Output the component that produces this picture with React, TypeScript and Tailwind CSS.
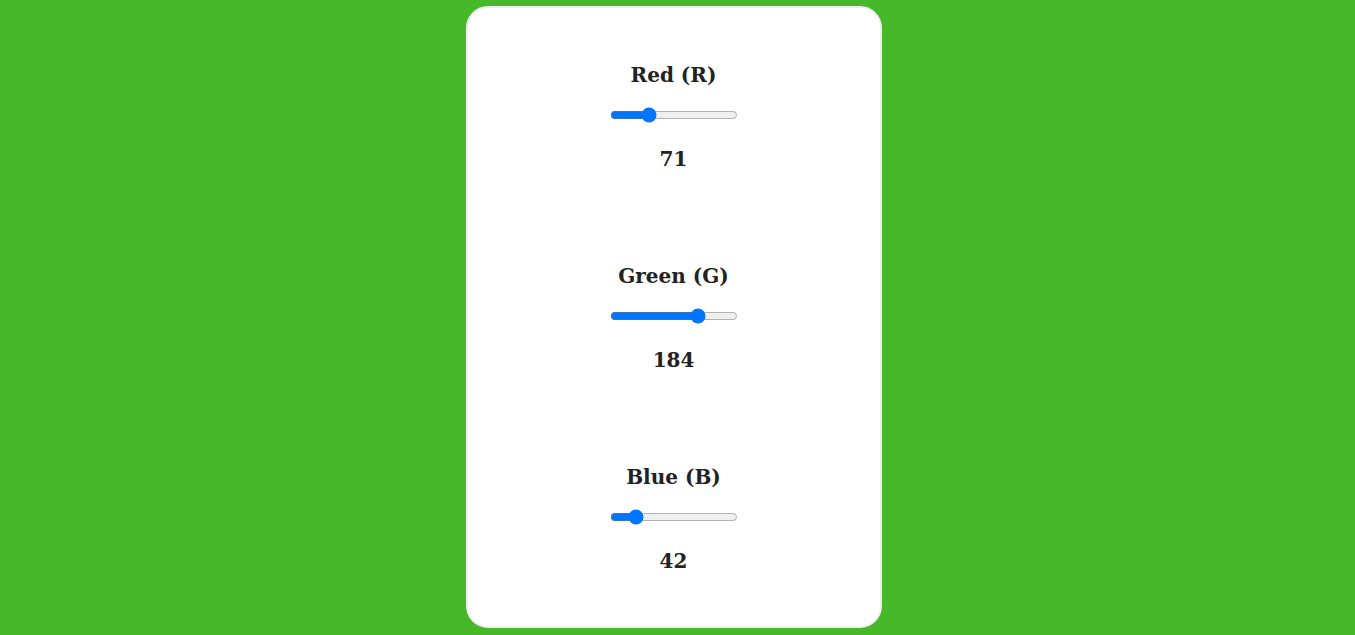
import { useState } from "react";

const channels = [
  { key: "r", label: "Red (R)", initial: 71 },
  { key: "g", label: "Green (G)", initial: 184 },
  { key: "b", label: "Blue (B)", initial: 42 },
];

function ChannelSlider({ label, value, onChange }: { label: string; value: number; onChange: (v: number) => void }) {
  return (
    <div className="flex flex-col items-center">
      <h2 className="text-[20px] font-bold leading-6 text-[#222]">{label}</h2>
      <input
        type="range"
        min={0}
        max={255}
        value={value}
        onChange={(e) => onChange(Number(e.target.value))}
        className="mt-5 h-4 w-[128px] accent-[#0075ff]"
      />
      <p className="mt-6 text-[20px] font-bold leading-6 text-[#222]">{value}</p>
    </div>
  );
}

export default function App() {
  const [values, setValues] = useState(channels.map((c) => c.initial));

  return (
    <div className="flex min-h-[635px] justify-center bg-[#47b82a] pt-[6px] pr-[8px] font-['DejaVu_Serif',serif]">
      <div className="flex h-[622px] w-[416px] flex-col gap-[93px] rounded-[22px] border-2 border-[#eeeeee] bg-white pt-[55px]">
        {channels.map((c, i) => (
          <ChannelSlider
            key={c.key}
            label={c.label}
            value={values[i]}
            onChange={(v) => setValues((prev) => prev.map((p, j) => (j === i ? v : p)))}
          />
        ))}
      </div>
    </div>
  );
}
